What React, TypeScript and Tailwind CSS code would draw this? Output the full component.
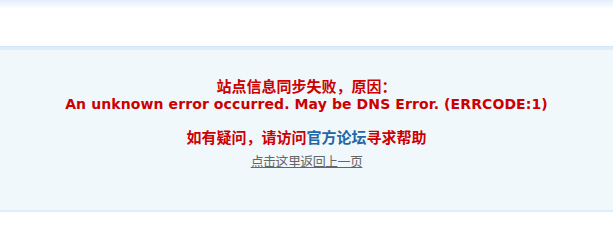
export default function App() {
  return (
    <div className="flex h-[212px] w-[613px] flex-col overflow-hidden bg-white font-['Liberation_Sans','Noto_Sans_CJK_SC',sans-serif]">
      <div className="h-[9px] bg-gradient-to-b from-[#e3eefa] to-white" />
      <div className="h-[37px] bg-white" />
      <div className="h-[4px] border-t border-[#d3e5f4] bg-[#deedfa]" />
      <div className="flex flex-1 flex-col items-center bg-[#f1f8fc] pt-[28px]">
        <p className="text-[15px] font-bold leading-[18px] text-[#cc0000]">站点信息同步失败，原因：</p>
        <p className="font-['DejaVu_Sans',sans-serif] text-[14px] font-bold leading-[17px] tracking-[0.1px] text-[#cc0000]">
          An unknown error occurred. May be DNS Error. (ERRCODE:1)
        </p>
        <p className="mt-[16px] text-[15px] font-bold leading-[18px] text-[#cc0000]">
          如有疑问，请访问
          <a href="#" className="text-[#2366a8]">
            官方论坛
          </a>
          寻求帮助
        </p>
        <a href="#" className="mt-[7px] text-[13px] leading-[16px] tracking-[-0.6px] text-[#666666] underline">
          点击这里返回上一页
        </a>
      </div>
      <div className="h-[2px] bg-[#deedfa]" />
    </div>
  );
}
